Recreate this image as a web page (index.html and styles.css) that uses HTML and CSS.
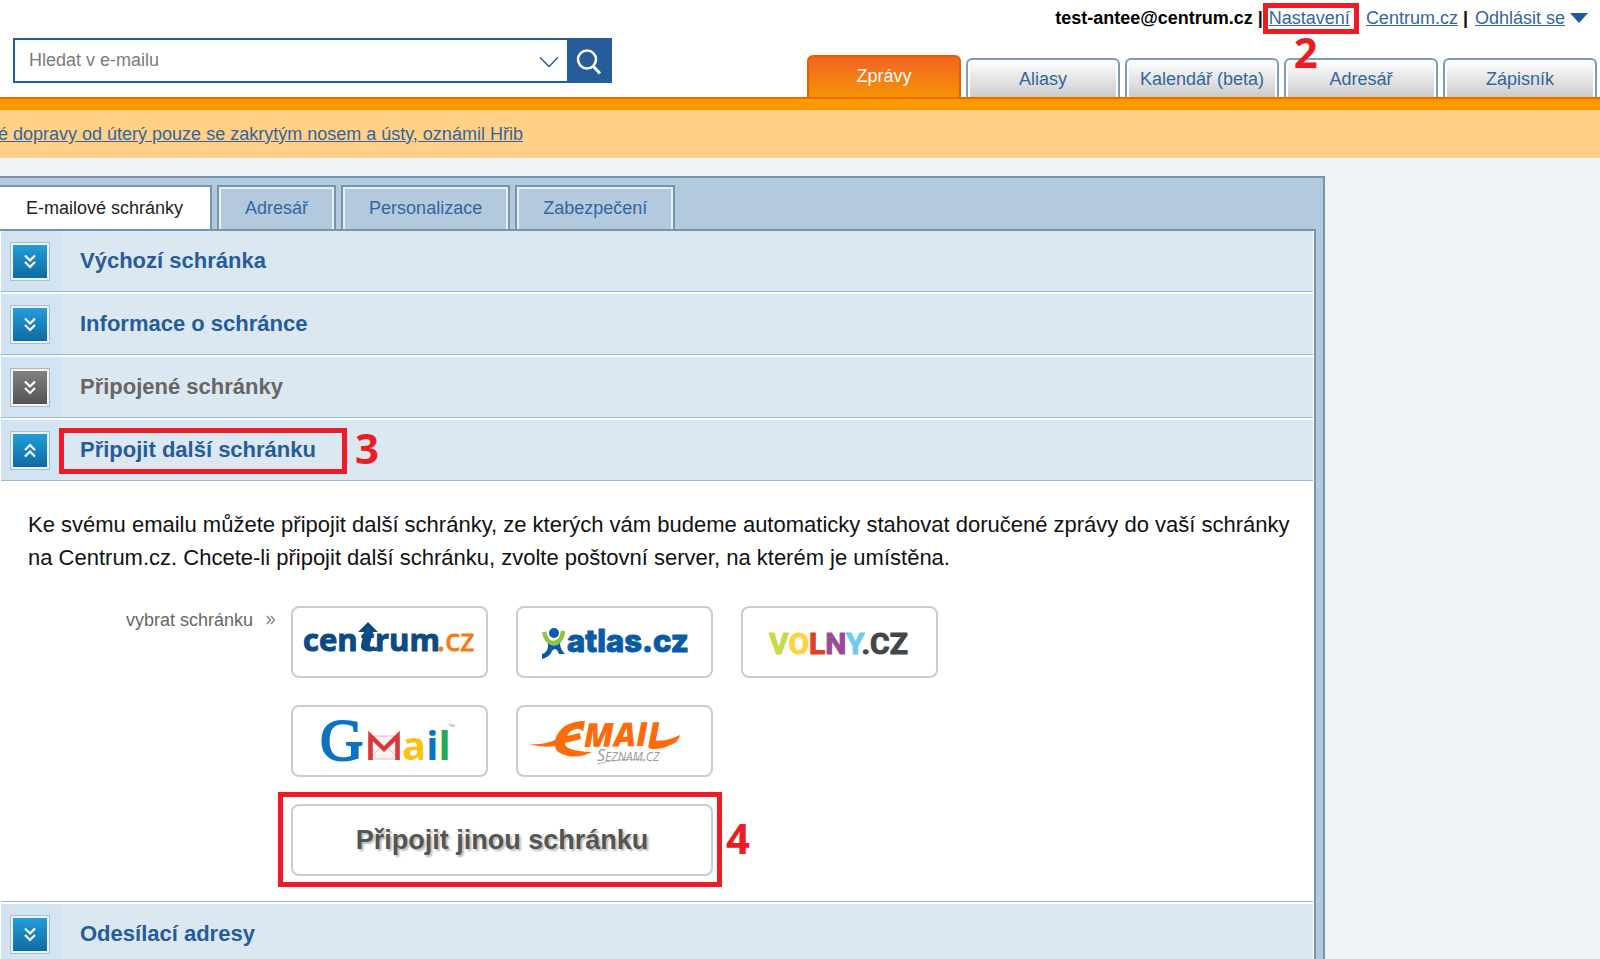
FILE: index.html
```html
<!DOCTYPE html>
<html lang="cs">
<head>
<meta charset="utf-8">
<title>Nastavení – E-mailové schránky</title>
<link rel="stylesheet" href="styles.css">
</head>
<body>
<svg class="defs" aria-hidden="true">
  <symbol id="chev-down" viewBox="0 0 12 15"><path d="M1 1.500 6 6.500 11 1.500M1 8 6 13 11 8" fill="none" stroke="#fff" stroke-width="2.200"/></symbol>
  <symbol id="chev-up" viewBox="0 0 12 15"><path d="M1 7 6 2 11 7M1 13.500 6 8.500 11 13.500" fill="none" stroke="#fff" stroke-width="2.200"/></symbol>
</svg>

<header class="header">
  <form class="search">
    <input class="search-input" type="search" placeholder="Hledat v e-mailu" aria-label="Hledat v e-mailu">
    <button class="search-more" type="button" aria-label="Možnosti hledání">
      <svg width="20" height="12" viewBox="0 0 20 12"><path d="M1 1.500 10 10.500 19 1.500" fill="none" stroke="#255c99" stroke-width="1.500"/></svg>
    </button>
    <button class="search-go" type="submit" aria-label="Hledat">
      <svg width="26" height="26" viewBox="0 0 26 26"><g fill="none" stroke="#fff" stroke-width="2.500"><circle cx="11" cy="10.500" r="9"/><path d="M17 17 24 24.500" stroke-width="3"/></g></svg>
    </button>
  </form>
  <div class="header-side">
    <div class="account">
      <strong>test-antee@centrum.cz</strong>
      <span class="bar">|</span>
      <span class="marked"><a href="#">Nastavení</a><i class="frame frame-settings"></i><b class="step step-2">2</b></span>
      <a class="portal" href="#">Centrum.cz</a>
      <span class="bar">|</span>
      <a class="logout" href="#">Odhlásit se</a>
      <svg width="18" height="10" viewBox="0 0 18 10"><path d="M0 0H18L9 10Z" fill="#1f5a9c"/></svg>
    </div>
    <nav class="main-tabs">
      <a class="main-tab current" href="#">Zprávy</a>
      <a class="main-tab" href="#">Aliasy</a>
      <a class="main-tab" href="#">Kalendář (beta)</a>
      <a class="main-tab" href="#">Adresář</a>
      <a class="main-tab" href="#">Zápisník</a>
    </nav>
  </div>
</header>

<div class="news"><a href="#">é dopravy od úterý pouze se zakrytým nosem a ústy, oznámil Hřib</a></div>

<main class="panel">
  <div class="tabs">
    <button class="tab active" type="button">E-mailové schránky</button>
    <button class="tab" type="button">Adresář</button>
    <button class="tab" type="button">Personalizace</button>
    <button class="tab" type="button">Zabezpečení</button>
  </div>
  <div class="sections">
    <section class="row">
      <div class="row-icon"><button class="toggle" type="button" aria-label="Rozbalit Výchozí schránka"><svg width="12" height="15"><use href="#chev-down"/></svg></button></div>
      <h2>Výchozí schránka</h2>
    </section>
    <section class="row">
      <div class="row-icon"><button class="toggle" type="button" aria-label="Rozbalit Informace o schránce"><svg width="12" height="15"><use href="#chev-down"/></svg></button></div>
      <h2>Informace o schránce</h2>
    </section>
    <section class="row disabled">
      <div class="row-icon"><button class="toggle" type="button" aria-label="Rozbalit Připojené schránky"><svg width="12" height="15"><use href="#chev-down"/></svg></button></div>
      <h2>Připojené schránky</h2>
    </section>
    <section class="row">
      <div class="row-icon"><button class="toggle" type="button" aria-label="Sbalit Připojit další schránku"><svg width="12" height="15"><use href="#chev-up"/></svg></button></div>
      <h2 class="marked">Připojit další schránku<i class="frame frame-section"></i><b class="step step-3">3</b></h2>
    </section>
    <div class="content">
      <p>Ke svému emailu můžete připojit další schránky, ze kterých vám budeme automaticky stahovat doručené zprávy do vaší schránky na Centrum.cz. Chcete-li připojit další schránku, zvolte poštovní server, na kterém je umístěna.</p>
      <div class="picker">
        <div class="picker-label">vybrat schránku
          <svg width="10" height="10" viewBox="0 0 10 10"><path d="M1 1 4.500 5 1 9M5 1 8.500 5 5 9" fill="none" stroke="#888" stroke-width="1.500"/></svg>
        </div>
        <div class="providers">
          <button class="provider" type="button" aria-label="centrum.cz">
            <svg width="193" height="68" viewBox="0 0 193 68">
              <text class="lg-centrum" x="10" y="43">cen<tspan x="68">t</tspan><tspan x="82">rum</tspan></text>
              <text class="lg-centrum-cz" x="144" y="43">.cz</text>
              <path d="M65 24 75 14 85 24H80L77 36Q76 40 84 39V43H75Q67 43 68 37L71 24Z" fill="#0b4a82"/>
            </svg>
          </button>
          <button class="provider" type="button" aria-label="atlas.cz">
            <svg width="193" height="68" viewBox="0 0 193 68">
              <path d="M26 24Q29 36 36 35Q44 34 45 23" fill="none" stroke="#8cc63f" stroke-width="4.500"/>
              <circle cx="36" cy="25" r="5" fill="#0a5aa6"/>
              <path d="M30 35Q36 40 42 35Q42 41 47 46H41Q38 38 34 43Q32 49 24 51V46Q31 44 30 35Z" fill="#0a5aa6"/>
              <text class="lg-atlas" x="49" y="44">atlas.cz</text>
            </svg>
          </button>
          <button class="provider" type="button" aria-label="VOLNY.CZ">
            <svg width="193" height="68" viewBox="0 0 193 68">
              <text class="lg-volny" x="26" y="46"><tspan fill="#c9d94a" stroke="#c9d94a">V</tspan><tspan fill="#ffd33c" stroke="#ffd33c">O</tspan><tspan fill="#e2401f" stroke="#e2401f">L</tspan><tspan fill="#984a98" stroke="#984a98">N</tspan><tspan fill="#6ccbee" stroke="#6ccbee">Y</tspan><tspan fill="#454648" stroke="#454648">.CZ</tspan></text>
            </svg>
          </button>
          <button class="provider" type="button" aria-label="Gmail">
            <svg width="193" height="68" viewBox="0 0 193 68">
              <text class="lg-gmail-g" x="27" y="53">G</text>
              <path d="M76 29H106V52H76Z" fill="#fdf3f3" stroke="#e9b5b5"/>
              <path d="M76 52 88 40M106 52 94 40" stroke="#e9b5b5" fill="none"/>
              <path d="M77.500 53V29L91 42 104.500 29V53" fill="none" stroke="#d9363b" stroke-width="4.500"/>
              <text class="lg-gmail" x="109" y="53"><tspan fill="#fbc30f">a</tspan><tspan fill="#0b73bf">i</tspan><tspan fill="#25a84f">l</tspan></text>
              <text class="lg-tm" x="155" y="22">™</text>
            </svg>
          </button>
          <button class="provider" type="button" aria-label="Email Seznam.cz">
            <svg width="193" height="68" viewBox="0 0 193 68">
              <g fill="#ff6a0a">
                <path d="M11 37Q27 38 37 33Q43 14 67 14L65 25Q63 21 58 22Q51 24 49 29L62 26 63 32 47 36Q46 44 74 45Q62 51 50 49Q37 46 37 39Q24 41 11 37Z"/>
                <path d="M134 35Q150 34 162 28Q162 35 148 40Q133 44 130 40Z"/>
              </g>
              <text class="lg-email" x="66" y="40" transform="rotate(-1 66 40)">MAIL</text>
              <path d="M79 57Q98 51 128 53" fill="none" stroke="#b5b5b5"/>
              <text class="lg-seznam" x="79" y="54"><tspan class="lg-seznam-s">S</tspan>EZNAM.CZ</text>
            </svg>
          </button>
          <div class="other marked">
            <button class="provider other-button" type="button">Připojit jinou schránku</button>
            <i class="frame frame-other"></i><b class="step step-4">4</b>
          </div>
        </div>
      </div>
    </div>
    <section class="row">
      <div class="row-icon"><button class="toggle" type="button" aria-label="Rozbalit Odesílací adresy"><svg width="12" height="15"><use href="#chev-down"/></svg></button></div>
      <h2>Odesílací adresy</h2>
    </section>
  </div>
</main>
</body>
</html>
```
FILE: styles.css
```css
* { box-sizing: border-box; }
body {
  margin: 0;
  height: 100vh;
  overflow: hidden;
  background: #edf3f7;
  font: 18px/20px "Liberation Sans", Arial, sans-serif;
  color: #111;
}
button, input { font: inherit; margin: 0; }
button { cursor: pointer; }
a { color: #33659f; }
.defs { position: absolute; width: 0; height: 0; }

/* Header */
.header {
  display: flex;
  justify-content: space-between;
  background: #fff;
}
.search {
  display: flex;
  width: 599px;
  height: 45px;
  margin: 38px 0 14px 13px;
  border: 2px solid #255c99;
}
.search-input {
  flex: 1;
  min-width: 0;
  padding: 0 0 2px 14px;
  border: 0;
  outline: 0;
  background: #fff;
}
.search-input::placeholder { color: #7a7a7a; opacity: 1; }
.search-more {
  width: 36px;
  padding: 2px 0 0;
  border: 0;
  background: #fff;
}
.search-go {
  display: grid;
  place-items: center;
  width: 43px;
  padding: 3px 0 0;
  border: 0;
  background: #255c99;
}
.header-side {
  display: flex;
  flex-direction: column;
  justify-content: space-between;
  padding-right: 3px;
}
.account {
  display: flex;
  align-items: center;
  justify-content: flex-end;
  padding: 8px 9px 0 0;
}
.account strong { color: #000; }
.account .bar { font-weight: bold; margin-left: 5px; }
.account .marked { margin-left: 6px; }
.portal { margin-left: 16px; }
.logout { margin: 0 5px 0 7px; }
.main-tabs {
  display: flex;
  align-items: flex-end;
  gap: 5px;
}
.main-tab {
  width: 154px;
  height: 39px;
  padding-top: 9px;
  border: 2px solid #7d9db3;
  border-bottom: 0;
  border-radius: 6px 6px 0 0;
  background: linear-gradient(#fff, #ccc);
  box-shadow: inset 2px 1px #fff, inset -2px 0 #fff;
  text-align: center;
  text-decoration: none;
}
.main-tab.current {
  height: 42px;
  border-color: #e66000;
  background: linear-gradient(#f26322, #f79406);
  box-shadow: none;
  color: #fff;
}

/* News strip */
.news {
  height: 61px;
  padding-top: 25px;
  border-top: 2px solid #ec6a00;
  background: linear-gradient(#f90 11px, #ffd086 11px);
  text-indent: -2px;
  white-space: nowrap;
}

/* Settings panel */
.panel {
  max-width: 1325px;
  margin-top: 18px;
  padding: 7px 7px 0 0;
  border: 2px solid #7596ad;
  border-left: 0;
  background: #b3c9dd;
}
.tabs { display: flex; gap: 5px; }
.tab {
  height: 44px;
  padding: 0 26px;
  border: 2px solid #7596ad;
  border-bottom: 0;
  background: #b3c9dd;
  box-shadow: inset 2px 2px #e8f0f7, inset -2px 0 #e8f0f7;
  color: #33659f;
}
.tab.active {
  padding-right: 27px;
  border-left: 0;
  background: #fff;
  box-shadow: none;
  color: #222;
}
.sections {
  padding: 0 1px;
  border: solid #7596ad;
  border-width: 2px 2px 0 0;
  background: #fff;
}
.row {
  display: flex;
  height: 63px;
  border-top: 2px solid #fff;
  border-bottom: 1px solid #9bb8d0;
  background: #dce8f1;
}
.row:first-child { height: 61px; border-top: 0; }
.row-icon {
  display: grid;
  place-items: center;
  width: 60px;
  padding-right: 2px;
  background: #d2e4f2;
}
.toggle {
  display: grid;
  place-items: center;
  width: 40px;
  height: 39px;
  padding: 0;
  border: 1px solid #a5c0d5;
  background: linear-gradient(#25a0dc, #0d68a0);
  box-shadow: inset 0 0 0 2px #eef5fa;
}
.row h2 {
  align-self: center;
  margin: 0 0 0 19px;
  color: #255c99;
  font-size: 22px;
  line-height: 26px;
}
.row.disabled h2 { color: #666; }
.row.disabled .toggle {
  border-color: #b5b5b5;
  background: linear-gradient(#858585, #505050);
}

.content {
  padding: 27px 16px 25px 27px;
  border-bottom: 1px solid #9bb8d0;
}
.content p { margin: 0; font-size: 22px; line-height: 33px; }
.picker { display: flex; margin-top: 32px; }
.picker-label {
  display: flex;
  align-items: center;
  gap: 13px;
  width: 263px;
  height: 28px;
  padding-left: 98px;
  color: #666;
}
.providers {
  display: grid;
  grid-template-columns: repeat(3, 197px);
  gap: 27px 28px;
}
.provider {
  display: block;
  height: 72px;
  padding: 0;
  border: 2px solid #ccc;
  border-radius: 8px;
  background: #fff;
}
.provider svg { display: block; }
.other { grid-column: span 2; }
.other-button {
  width: 100%;
  color: #555;
  font-size: 27px;
  font-weight: bold;
  text-shadow: 2px 2px 2px #bbb;
}

/* Provider logos */
.lg-centrum { font: bold 31px "Open Sans", sans-serif; fill: #0b4a82; stroke: #0b4a82; stroke-width: 1px; }
.lg-centrum-cz { font: 31px "Open Sans", sans-serif; fill: #f47a16; stroke: #f47a16; stroke-width: 1px; }
.lg-atlas { font: 800 31px Inter, sans-serif; fill: #0a5aa6; stroke: #0a5aa6; stroke-width: 1px; }
.lg-volny { font: bold 30px Roboto, sans-serif; stroke-width: 1px; stroke-linejoin: round; }
.lg-gmail-g { font: 60px "Liberation Serif", serif; fill: #0b73bf; stroke: #0b73bf; stroke-width: 2px; }
.lg-gmail { font: bold 40px "Open Sans", sans-serif; }
.lg-tm { font: 7px "Liberation Sans", sans-serif; fill: #999; }
.lg-email { font: italic 800 33px "Open Sans", sans-serif; fill: #ff6a0a; }
.lg-seznam { font: italic 12px "Open Sans", sans-serif; fill: #999; }
.lg-seznam-s { font-size: 16px; }

/* Tutorial markers drawn over the page */
.marked { position: relative; }
.frame {
  position: absolute;
  border: 5px solid #ed1c24;
  pointer-events: none;
}
.frame-settings { inset: -5px -9px -6px -6px; }
.frame-section { inset: -9px -31px -11px -21px; }
.frame-other { inset: -12px -9px -11px -13px; }
.step {
  position: absolute;
  color: #ed1c24;
  font: bold 42px/42px "Open Sans", sans-serif;
}
.step-2 { left: 25px; top: 23px; }
.step-3 { left: calc(100% + 39px); top: -10px; }
.step-4 { left: calc(100% + 13px); top: 13px; }
```
